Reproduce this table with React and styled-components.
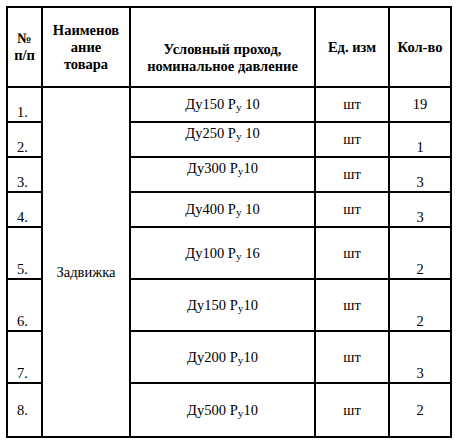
import React from "react";
import styled, { createGlobalStyle } from "styled-components";

const GlobalStyle = createGlobalStyle`
  html, body {
    margin: 0;
    padding: 0;
    background: #ffffff;
  }
  body {
    font-family: "Liberation Serif", "Times New Roman", serif;
    color: #000000;
  }
`;

const Page = styled.div`
  padding: 6px 0 0 6px;
`;

const Table = styled.table`
  border-collapse: collapse;
  table-layout: fixed;
  width: 445px;
  font-size: 14.5px;
  line-height: 17px;
`;

const Row = styled.tr`
  height: ${(p) => p.$h}px;
`;

const HeadCell = styled.th`
  border: 2px solid #000;
  font-weight: bold;
  text-align: center;
  vertical-align: middle;
  padding: ${(p) => p.$pt || 0}px 2px 0 2px;
`;

const Cell = styled.td`
  border: 2px solid #000;
  text-align: ${(p) => p.$align || "center"};
  vertical-align: ${(p) => p.$v || "middle"};
  padding: ${(p) => p.$pt || 0}px 2px 0 ${(p) => p.$pl || 2}px;
`;

const Sub = styled.span`
  font-size: 0.78em;
  vertical-align: -2px;
  line-height: 0;
`;

const rows = [
  { n: "1.", nv: "bottom", d: "Ду150 ", p: " 10", dv: "middle", q: "19", qv: "middle", h: 35 },
  { n: "2.", nv: "bottom", d: "Ду250 ", p: " 10", dv: "top", q: "1", qv: "bottom", h: 35 },
  { n: "3.", nv: "bottom", d: "Ду300 ", p: "10", dv: "top", q: "3", qv: "bottom", h: 35 },
  { n: "4.", nv: "bottom", d: "Ду400 ", p: " 10", dv: "middle", q: "3", qv: "bottom", h: 35 },
  { n: "5.", nv: "bottom", d: "Ду100 ", p: " 16", dv: "middle", q: "2", qv: "bottom", h: 52 },
  { n: "6.", nv: "bottom", d: "Ду150 ", p: "10", dv: "middle", q: "2", qv: "bottom", h: 52 },
  { n: "7.", nv: "bottom", d: "Ду200 ", p: "10", dv: "middle", q: "3", qv: "bottom", h: 52 },
  { n: "8.", nv: "middle", d: "Ду500 ", p: "10", dv: "middle", q: "2", qv: "middle", h: 54 },
];

export default function App() {
  return (
    <Page>
      <GlobalStyle />
      <Table>
        <colgroup>
          <col style={{ width: 35 }} />
          <col style={{ width: 88 }} />
          <col style={{ width: 185 }} />
          <col style={{ width: 74 }} />
          <col style={{ width: 62 }} />
        </colgroup>
        <thead>
          <Row $h={80}>
            <HeadCell>
              №<br />п/п
            </HeadCell>
            <HeadCell>
              Наименов
              <br />
              ание
              <br />
              товара
            </HeadCell>
            <HeadCell $pt={22}>
              Условный проход,
              <br />
              номинальное давление
            </HeadCell>
            <HeadCell>Ед. изм</HeadCell>
            <HeadCell>Кол-во</HeadCell>
          </Row>
        </thead>
        <tbody>
          {rows.map((r, i) => (
            <Row key={r.n} $h={r.h}>
              <Cell $align="left" $pl={9} $v={r.nv}>
                {r.n}
              </Cell>
              {i === 0 && (
                <Cell rowSpan={8} $pt={20}>
                  Задвижка
                </Cell>
              )}
              <Cell $v={r.dv} $pt={r.dv === "top" ? 2 : 0}>
                {r.d}Р<Sub>у</Sub>
                {r.p}
              </Cell>
              <Cell>шт</Cell>
              <Cell $v={r.qv}>{r.q}</Cell>
            </Row>
          ))}
        </tbody>
      </Table>
    </Page>
  );
}
